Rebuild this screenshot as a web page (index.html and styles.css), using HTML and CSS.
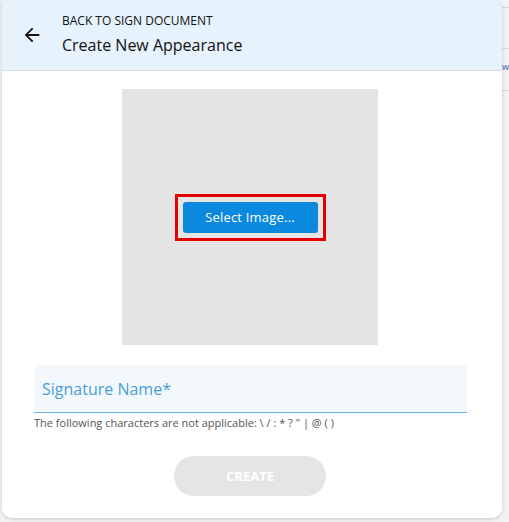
FILE: index.html
```html
<!DOCTYPE html>
<html lang="en">
<head>
  <meta charset="UTF-8" />
  <title>Create New Appearance</title>
  <link rel="stylesheet" href="styles.css">
</head>
<body>
  <div class="backdrop">
    <span class="rule r1"></span>
    <span class="rule r2"></span>
    <span class="peek">w</span>
    <span class="rule r3"></span>
  </div>
  <div class="panel">
    <div class="header">
      <button class="back" aria-label="Back">
        <svg width="22" height="22" viewBox="0 0 24 24"><path d="M20 11H7.83l5.59-5.59L12 4l-8 8 8 8 1.41-1.41L7.83 13H20v-2z" fill="#111"/></svg>
      </button>
      <div class="titles">
        <div class="crumb">BACK TO SIGN DOCUMENT</div>
        <div class="title">Create New Appearance</div>
      </div>
    </div>
    <div class="body">
      <div class="preview">
        <div class="focus-ring">
          <button class="select-btn">Select Image...</button>
        </div>
      </div>
      <div class="field">
        <div class="input">Signature Name*</div>
        <div class="hint">The following characters are not applicable: \ / : * ? " | @ ( )</div>
      </div>
      <button class="create" disabled>CREATE</button>
    </div>
  </div>
</body>
</html>
```

FILE: styles.css
```css
html, body {
  margin: 0;
  height: 100%;
}
body {
  background: #f3f3f3;
  font-family: "Open Sans", "Noto Sans", sans-serif;
  position: relative;
  overflow: hidden;
}
.backdrop {
  position: absolute;
  top: 0;
  right: 0;
  width: 7px;
  height: 100%;
}
.rule {
  position: absolute;
  left: 0;
  right: 0;
  height: 1px;
  background: #d8d8d8;
}
.r1 { top: 7px; }
.r2 { top: 48px; }
.r3 { top: 90px; }
.peek {
  position: absolute;
  top: 62px;
  left: 0;
  font-size: 9px;
  line-height: 10px;
  color: #3a5a9a;
}
.panel {
  position: absolute;
  left: 2px;
  top: 0;
  width: 500px;
  height: 518px;
  background: #fff;
  border-radius: 0 10px 10px 10px;
  box-shadow: 0 1px 4px rgba(0,0,0,0.18);
  overflow: hidden;
}
.header {
  display: flex;
  align-items: center;
  height: 71px;
  background: #e6f3fd;
  border-bottom: 1px solid #d2dde6;
  box-sizing: border-box;
}
.back {
  border: none;
  background: none;
  padding: 0;
  margin: 0 0 0 19px;
  width: 22px;
  height: 22px;
  display: flex;
}
.titles {
  margin-left: 19px;
  margin-top: -2px;
}
.crumb {
  font-size: 12px;
  color: #111;
  line-height: 16px;
}
.title {
  font-size: 16px;
  color: #111;
  margin-top: 5px;
  line-height: 22px;
}
.body {
  display: flex;
  flex-direction: column;
  align-items: center;
  padding: 18px 4px 0 0;
}
.preview {
  width: 256px;
  height: 256px;
  background: #e4e4e4;
  display: flex;
  align-items: center;
  justify-content: center;
}
.focus-ring {
  border: 3px solid #e50000;
  padding: 5px;
}
.select-btn {
  display: block;
  width: 135px;
  height: 31px;
  border: none;
  border-radius: 3px;
  background: #0a89de;
  color: #fff;
  font-family: inherit;
  font-size: 13px;
  letter-spacing: 0.2px;
}
.field {
  align-self: stretch;
  margin: 20px 31px 0 32px;
}
.input {
  height: 48px;
  box-sizing: border-box;
  background: #f3f8fc;
  border-bottom: 1px solid #67b2e4;
  border-radius: 3px 3px 0 0;
  padding: 13px 8px 0;
  font-size: 16px;
  color: #4a9ed8;
}
.hint {
  font-size: 11px;
  color: #555;
  margin-top: 2px;
}
.create {
  margin-top: 26px;
  width: 152px;
  height: 40px;
  border: none;
  border-radius: 20px;
  background: #e5e5e5;
  color: #fff;
  font-family: inherit;
  font-weight: bold;
  font-size: 13px;
}
```
